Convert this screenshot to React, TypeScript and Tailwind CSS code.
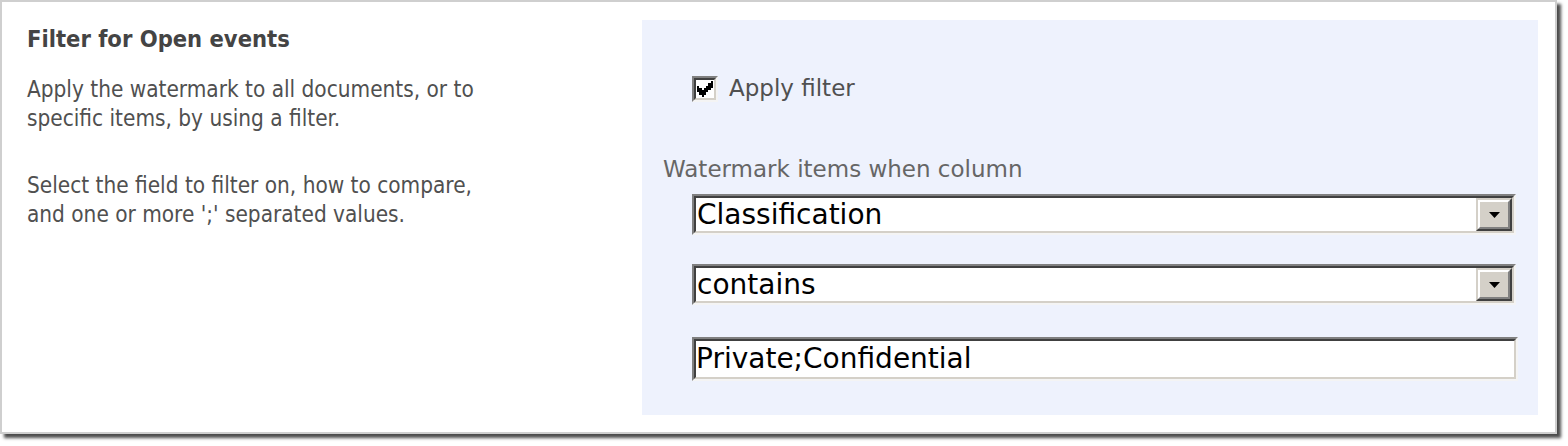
const condensed = "font-['Tahoma','DejaVu_Sans_Condensed','DejaVu_Sans',sans-serif]"
const wide = "font-['Verdana','DejaVu_Sans',sans-serif]"

const checkRows = [
  [6, 1],
  [5, 2],
  [0, 1, 4, 3],
  [0, 2, 3, 3],
  [0, 5],
  [1, 3],
  [2, 1],
]

function CheckMark() {
  return (
    <svg width="16" height="16" viewBox="0 0 7 7" shapeRendering="crispEdges">
      {checkRows.map((row, y) => {
        const parts = []
        for (let i = 0; i < row.length; i += 2) {
          parts.push(<rect key={i} x={row[i]} y={y} width={row[i + 1]} height={1} fill="#000" />)
        }
        return parts
      })}
    </svg>
  )
}

function Sunken({ className, children }: { className?: string; children: React.ReactNode }) {
  return (
    <div className={`border-2 border-t-[#808080] border-l-[#808080] border-b-[#f4f4f4] border-r-[#f4f4f4] ${className ?? ''}`}>
      <div className="h-full w-full border-2 border-t-[#404040] border-l-[#404040] border-b-[#d4d0c8] border-r-[#d4d0c8] bg-white">
        {children}
      </div>
    </div>
  )
}

function DropButton() {
  return (
    <div className="h-full w-[36px] border-2 border-t-[#d4d0c8] border-l-[#d4d0c8] border-b-[#404040] border-r-[#404040]">
      <div className="flex h-full w-full items-center justify-center border-2 border-t-white border-l-white border-b-[#808080] border-r-[#808080] bg-[#d4d0c8]">
        <svg width="11" height="6" viewBox="0 0 11 6">
          <polygon points="0,0 11,0 5.5,6" fill="#000" />
        </svg>
      </div>
    </div>
  )
}

function Select({ value }: { value: string }) {
  return (
    <Sunken className="h-[41px] w-[824px]">
      <div className="flex h-full items-stretch">
        <span className={`flex-1 pl-[1px] text-[28px] leading-[33px] text-black ${wide}`}>{value}</span>
        <DropButton />
      </div>
    </Sunken>
  )
}

export default function App() {
  return (
    <div className={`h-[446px] w-[1568px] bg-white ${condensed}`}>
      <div className="flex h-[434px] w-[1557px] border-2 border-[#cfcfcf] bg-white shadow-[4px_4px_3px_rgba(0,0,0,0.7)]">
        <div className="w-[640px] pl-[25px] pt-[23px] text-[22.4px] leading-[29px] text-[#505050]">
          <h3 className="text-[23.5px] font-bold text-[#444]">Filter for Open events</h3>
          <p className="mt-[21px]">
            Apply the watermark to all documents, or to
            <br />
            specific items, by using a filter.
          </p>
          <p className="mt-[38px]">
            Select the field to filter on, how to compare,
            <br />
            and one or more ';' separated values.
          </p>
        </div>
        <div className="mt-[18px] h-[395px] w-[896px] bg-[#eef2fd]">
          <div className="ml-[50px] mt-[54px] flex items-center gap-[11px]">
            <Sunken className="h-[26px] w-[26px]">
              <div className="flex h-full w-full items-center justify-center">
                <CheckMark />
              </div>
            </Sunken>
            <span className={`text-[23px] leading-[29px] text-[#505050] ${wide}`}>Apply filter</span>
          </div>
          <div className={`ml-[21px] mt-[52px] text-[23px] leading-[29px] text-[#666] ${wide}`}>Watermark items when column</div>
          <div className="ml-[50px] mt-[10px] flex flex-col gap-[29px]">
            <Select value="Classification" />
            <Select value="contains" />
          </div>
          <Sunken className="ml-[50px] mt-[32px] h-[44px] w-[826px]">
            <span className={`block text-[28px] leading-[36px] text-black ${wide}`}>Private;Confidential</span>
          </Sunken>
        </div>
      </div>
    </div>
  )
}
